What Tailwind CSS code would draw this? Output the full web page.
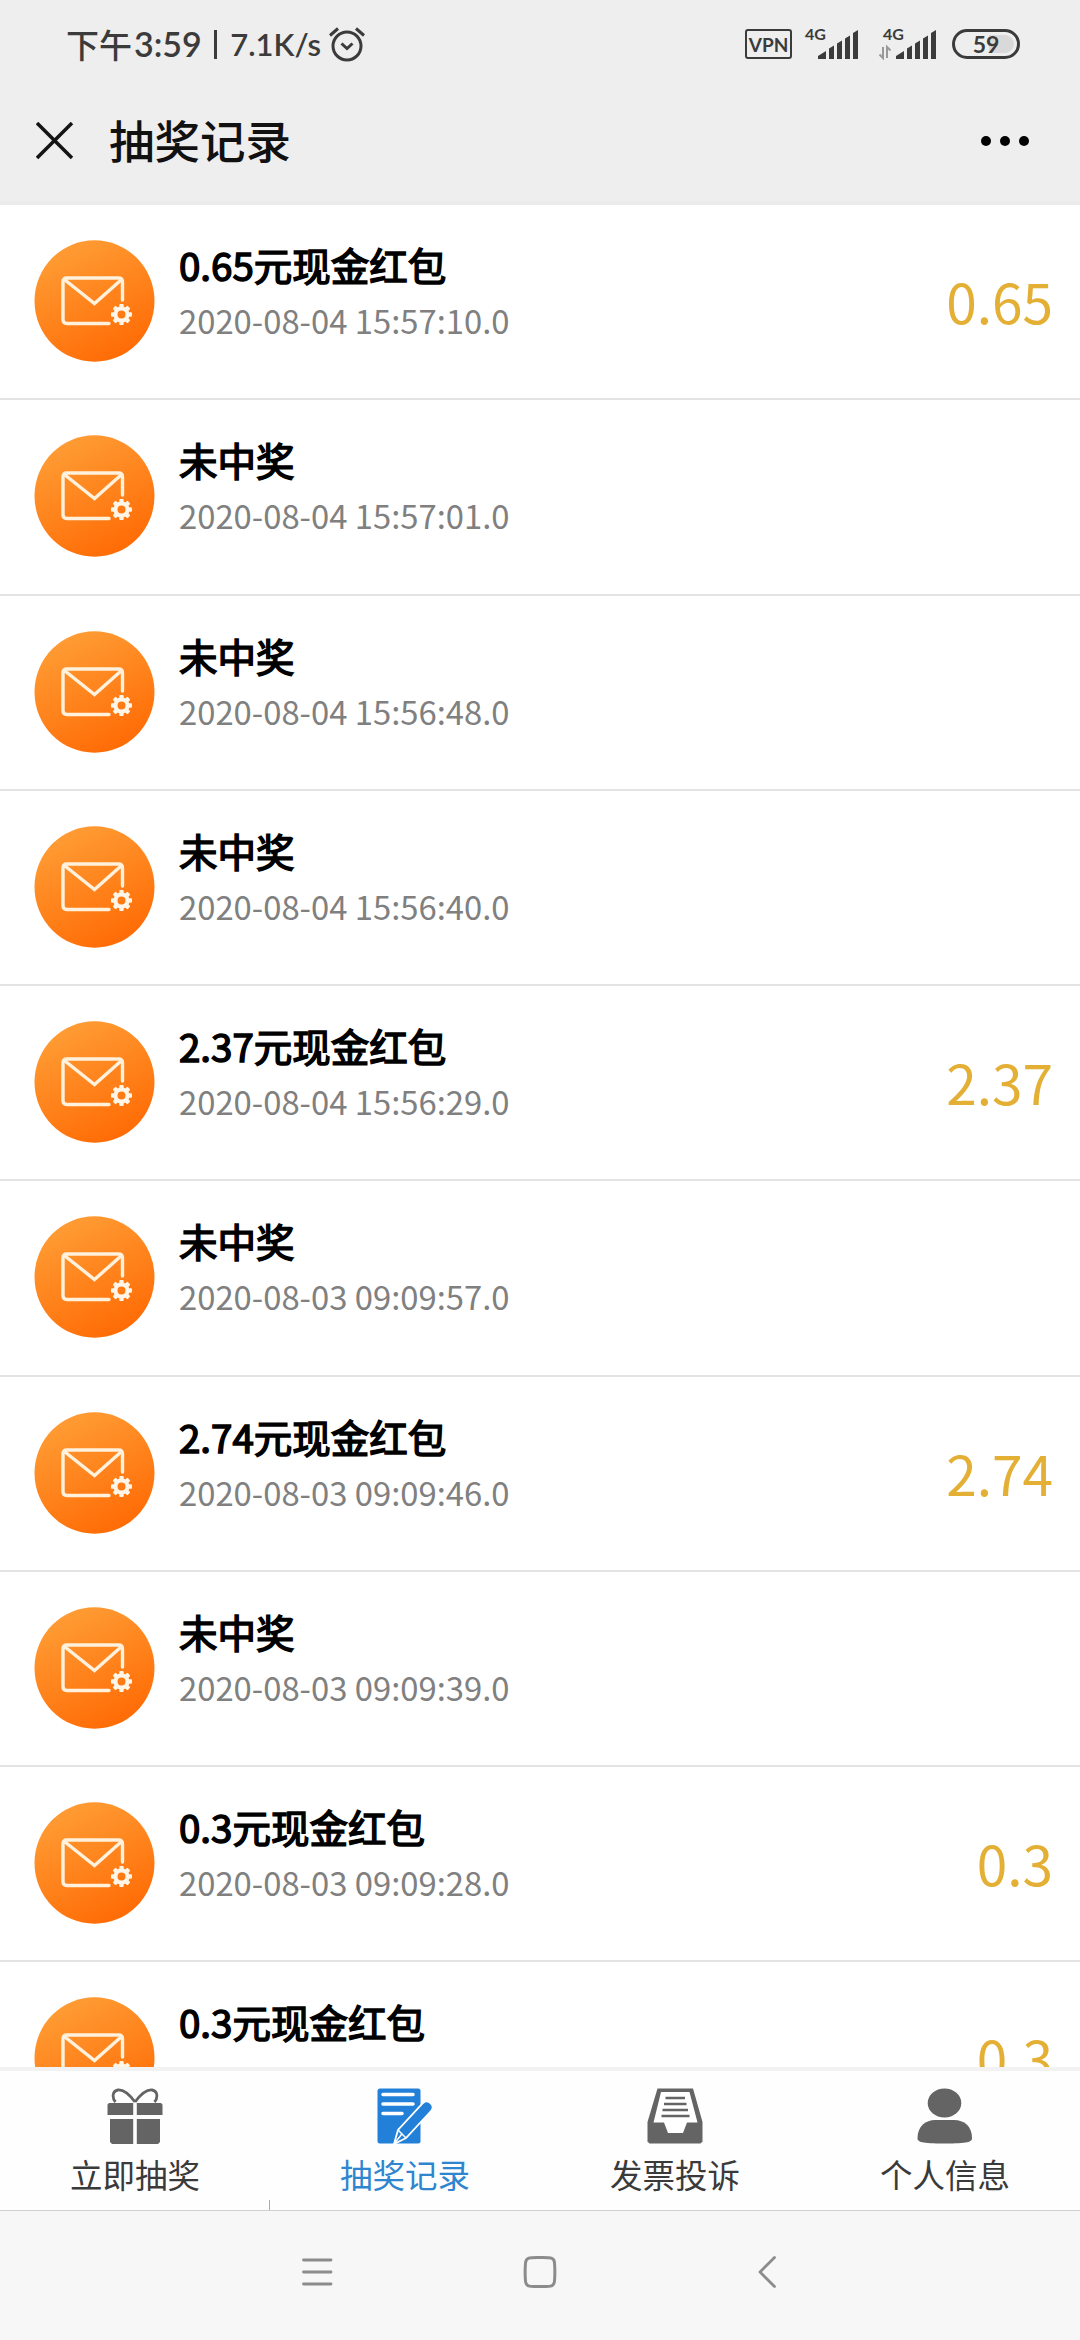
<!DOCTYPE html>
<html lang="zh-CN">
<head>
<meta charset="utf-8">
<title>抽奖记录</title>
<script src="https://cdn.jsdelivr.net/npm/@tailwindcss/browser@4"></script>
</head>
<body class="bg-white">
<svg class="absolute h-0 w-0">
  <defs>
    <linearGradient id="og" x1="0.2" y1="0" x2="0.7" y2="1"><stop offset="0" stop-color="#ff9f37"/><stop offset="1" stop-color="#ff6a04"/></linearGradient>
  </defs>
  <symbol id="bars" viewBox="0 0 40 29">
    <path d="M0 29V26L8 21V29ZM11 29V18.500L16 15.500V29ZM19 29V13.500L24 10.500V29ZM27 29V8.500L32 5.500V29ZM35 29V3L40 0V29Z" fill="#3b3b3b"/>
  </symbol>
</svg>
<div class="flex h-[2340px] w-[1080px] flex-col overflow-hidden font-['Noto_Sans_CJK_SC',sans-serif]">
  <header class="flex h-[205px] shrink-0 flex-col border-b-4 border-[#ebebeb] bg-[#eeeeee]">
    <div class="flex h-[88px] items-center pl-[66px] pr-[60px] text-[#3b3b3b]">
      <span class="text-[33px] leading-none font-medium">下午</span>
      <span class="ml-0.5 font-[Lato] text-[34px] leading-none font-semibold">3:59</span>
      <span class="ml-[12px] h-[29px] w-[3.500px] bg-[#3b3b3b]"></span>
      <span class="ml-[13px] font-[Lato] text-[31px] leading-none font-semibold">7.1K/s</span>
      <svg class="ml-[8px] h-[36px] w-[36px]" viewBox="0 0 36 36" fill="none" stroke="#3b3b3b" stroke-width="3"><circle cx="18" cy="20" r="14"/><path d="M12.500 17.500l5.500 5 5.500-5M1 9.500l8-7M35 9.500l-8-7"/></svg>
      <div class="ml-auto flex items-center">
        <span class="flex h-[30px] w-[47px] items-center justify-center rounded-[3px] border-[2.500px] border-[#3b3b3b] font-[Lato] text-[19px] leading-none font-bold">VPN</span>
        <svg class="ml-[13px] h-[32px] w-[53px] overflow-visible" viewBox="0 0 53 32"><text x="0" y="12" font-family="Lato" font-weight="700" font-size="16" fill="#3b3b3b">4G</text><use href="#bars" x="13" y="2" width="40" height="29"/></svg>
        <svg class="ml-[20px] h-[32px] w-[58px] overflow-visible" viewBox="0 0 58 32"><text x="5" y="12" font-family="Lato" font-weight="700" font-size="16" fill="#3b3b3b">4G</text><path d="M5 19V30L1.500 26.500M9 30V19L12.500 22.500" fill="none" stroke="#999" stroke-width="2"/><use href="#bars" x="18" y="2" width="40" height="29"/></svg>
        <span class="ml-[16px] flex h-[30px] w-[68px] items-center justify-center rounded-full border-3 border-[#3b3b3b] bg-linear-to-r from-transparent from-55% to-[#d9d9d9] to-55% bg-clip-content p-[3px] font-[Lato] text-[23px] leading-none font-bold">59</span>
      </div>
    </div>
    <div class="flex h-[106px] items-center pl-[36px] pr-[51px]">
      <svg class="h-[38px] w-[38px]" viewBox="0 0 38 38" stroke="#141414" stroke-width="3.500"><path d="M1 1L36 36M36 1L1 36"/></svg>
      <h1 class="-mt-[3px] ml-[35px] text-[45.500px] leading-none font-medium text-[#111]">抽奖记录</h1>
      <div class="ml-auto flex gap-[9px]"><i class="size-[10px] rounded-full bg-black"></i><i class="size-[10px] rounded-full bg-black"></i><i class="size-[10px] rounded-full bg-black"></i></div>
    </div>
  </header>

  <main id="list" class="h-[1862px] shrink-0 overflow-hidden"></main>

  <nav class="grid h-[144px] shrink-0 grid-cols-4 border-t-4 border-b border-t-[#f2f2f2] border-b-[#cfcfcf] bg-[#fefefe] text-[32.500px] leading-none text-[#3a3a3a]">
    <div class="relative flex flex-col items-center pt-[17px]">
      <svg class="h-[56px] w-[56px]" viewBox="0 0 56 56" fill="#646464"><path d="M28 14C22 6 16 1.500 11 2C5 3 5 10 8.500 14M28 14C34 6 40 1.500 45 2C51 3 51 10 47.500 14" fill="none" stroke="#646464" stroke-width="2.800"/><path d="M2 15H26.200V27H.5V16.500ZM29.800 15H54L55.500 16.500V27H29.800ZM3 31H26.200V56H5L3 54ZM29.800 31H53V54L51 56H29.800Z"/></svg>
      <span class="mt-[14px]">立即抽奖</span>
      <i class="absolute right-0 bottom-0 h-[10px] w-px bg-[#aaa]"></i>
    </div>
    <div class="flex flex-col items-center pt-[17px] text-[#2f86cf]">
      <svg class="h-[56px] w-[56px]" viewBox="0 0 56 56"><rect x="0.500" y="0.500" width="43" height="55" rx="2.500" fill="#2380d8"/><path d="M6 6.500H36M6 16H36M6 25.500H25" stroke="#fff" stroke-width="3.500" stroke-linecap="round"/><path d="M17 56L21 42L46 15Q50 11.500 54 15.500Q57.500 19 54 23L29 50Z" fill="#2380d8" stroke="#fff" stroke-width="1.800"/><path d="M21 42L29 50M17 56L24.500 46.500" stroke="#fff" stroke-width="1.500"/></svg>
      <span class="mt-[14px]">抽奖记录</span>
    </div>
    <div class="flex flex-col items-center pt-[17px]">
      <svg class="h-[56px] w-[56px]" viewBox="0 0 56 56"><path d="M10.500.5H46L55.500 34V53.500L53.500 55.500H2.500L.5 53.500V34Z" fill="#646464"/><path d="M14 4H42.500L50.500 34.500H40L36 45H21L17 34.500H6.500Z" fill="#fff"/><path d="M18.500 10H38M17 16H39.500M15.500 22H41M14.500 28H42.500" stroke="#646464" stroke-width="2.500"/></svg>
      <span class="mt-[14px]">发票投诉</span>
    </div>
    <div class="flex flex-col items-center pt-[17px]">
      <svg class="h-[56px] w-[56px]" viewBox="0 0 56 56" fill="#646464"><ellipse cx="27.500" cy="15" rx="16.800" ry="14.500"/><path d="M.5 50C.5 38 9 32 18 32H37C47 32 55 38 55 50C55 54 51 55.500 27.500 55.500C4 55.500.5 54 .5 50Z"/></svg>
      <span class="mt-[14px]">个人信息</span>
    </div>
  </nav>

  <footer class="flex flex-1 items-start bg-[#f7f7f7] pt-[44px] pl-[301px]">
    <svg class="h-[34px] w-[32px]" viewBox="0 0 32 34" stroke="#8c8c8c" stroke-width="2.800" stroke-linecap="round"><path d="M2.500 5H30M2.500 17H30M2.500 29H30"/></svg>
    <svg class="ml-[190px] h-[34px] w-[34px]" viewBox="0 0 34 34" fill="none" stroke="#8c8c8c" stroke-width="3"><path d="M17 2.500C27 2.500 31.500 2 31.500 8C32 14 32 20 31.500 26C31 32 28 31.500 17 31.500C6 31.500 3 32 2.500 26C2 20 2 14 2.500 8C3 2 7 2.500 17 2.500Z"/></svg>
    <svg class="ml-[200px] h-[34px] w-[22px]" viewBox="0 0 22 34" fill="none" stroke="#8c8c8c" stroke-width="2.800" stroke-linecap="round" stroke-linejoin="round"><path d="M17.500 2.500L3 17L17.500 31.500"/></svg>
  </footer>
</div>
<script>
const records = [
  ['0.65元现金红包','2020-08-04 15:57:10.0','0.65'],
  ['未中奖','2020-08-04 15:57:01.0',''],
  ['未中奖','2020-08-04 15:56:48.0',''],
  ['未中奖','2020-08-04 15:56:40.0',''],
  ['2.37元现金红包','2020-08-04 15:56:29.0','2.37'],
  ['未中奖','2020-08-03 09:09:57.0',''],
  ['2.74元现金红包','2020-08-03 09:09:46.0','2.74'],
  ['未中奖','2020-08-03 09:09:39.0',''],
  ['0.3元现金红包','2020-08-03 09:09:28.0','0.3'],
  ['0.3元现金红包','','0.3']
];
const teeth = [0,45,90,135,180,225,270,315].map(a => `<rect x="-2.200" y="-10.500" width="4.400" height="5" rx="1" fill="#fff5e6" transform="translate(87.500 74.500) rotate(${a})"/>`).join('');
const icon = `<svg class="h-[122px] w-[121px] shrink-0" viewBox="0 0 121 122"><ellipse cx="60.500" cy="61" rx="60" ry="60.700" fill="url(#og)"/><path d="M75 83.500H33Q29 83.500 29 79.500V42Q29 38 33 38H84.500Q88.500 38 88.500 42V60M31 40L60.500 63.500L87 40" fill="none" stroke="#fff1dc" stroke-width="3.400" stroke-linecap="round"/>${teeth}<circle cx="87.500" cy="74.500" r="6" fill="none" stroke="#fff5e6" stroke-width="4"/></svg>`;
document.getElementById('list').innerHTML = records.map(([t,d,a]) => `
<div class="flex h-[195.250px] items-start border-b-2 border-[#e3e3e3] pl-[34px] pr-[27px] pt-[35px]">
  ${icon}
  <div class="ml-[24px] flex flex-col">
    <b class="mt-[4px] text-[38.500px] leading-[40px] font-normal text-black [-webkit-text-stroke:1.500px_black]">${t}</b>
    <span class="mt-[16px] text-[32.800px] leading-[40px] text-[#808080]">${d}</span>
  </div>
  <span class="mt-[30px] ml-auto text-[55px] leading-[60px] text-[#e3b035]">${a}</span>
</div>`).join('');
</script>
</body>
</html>
